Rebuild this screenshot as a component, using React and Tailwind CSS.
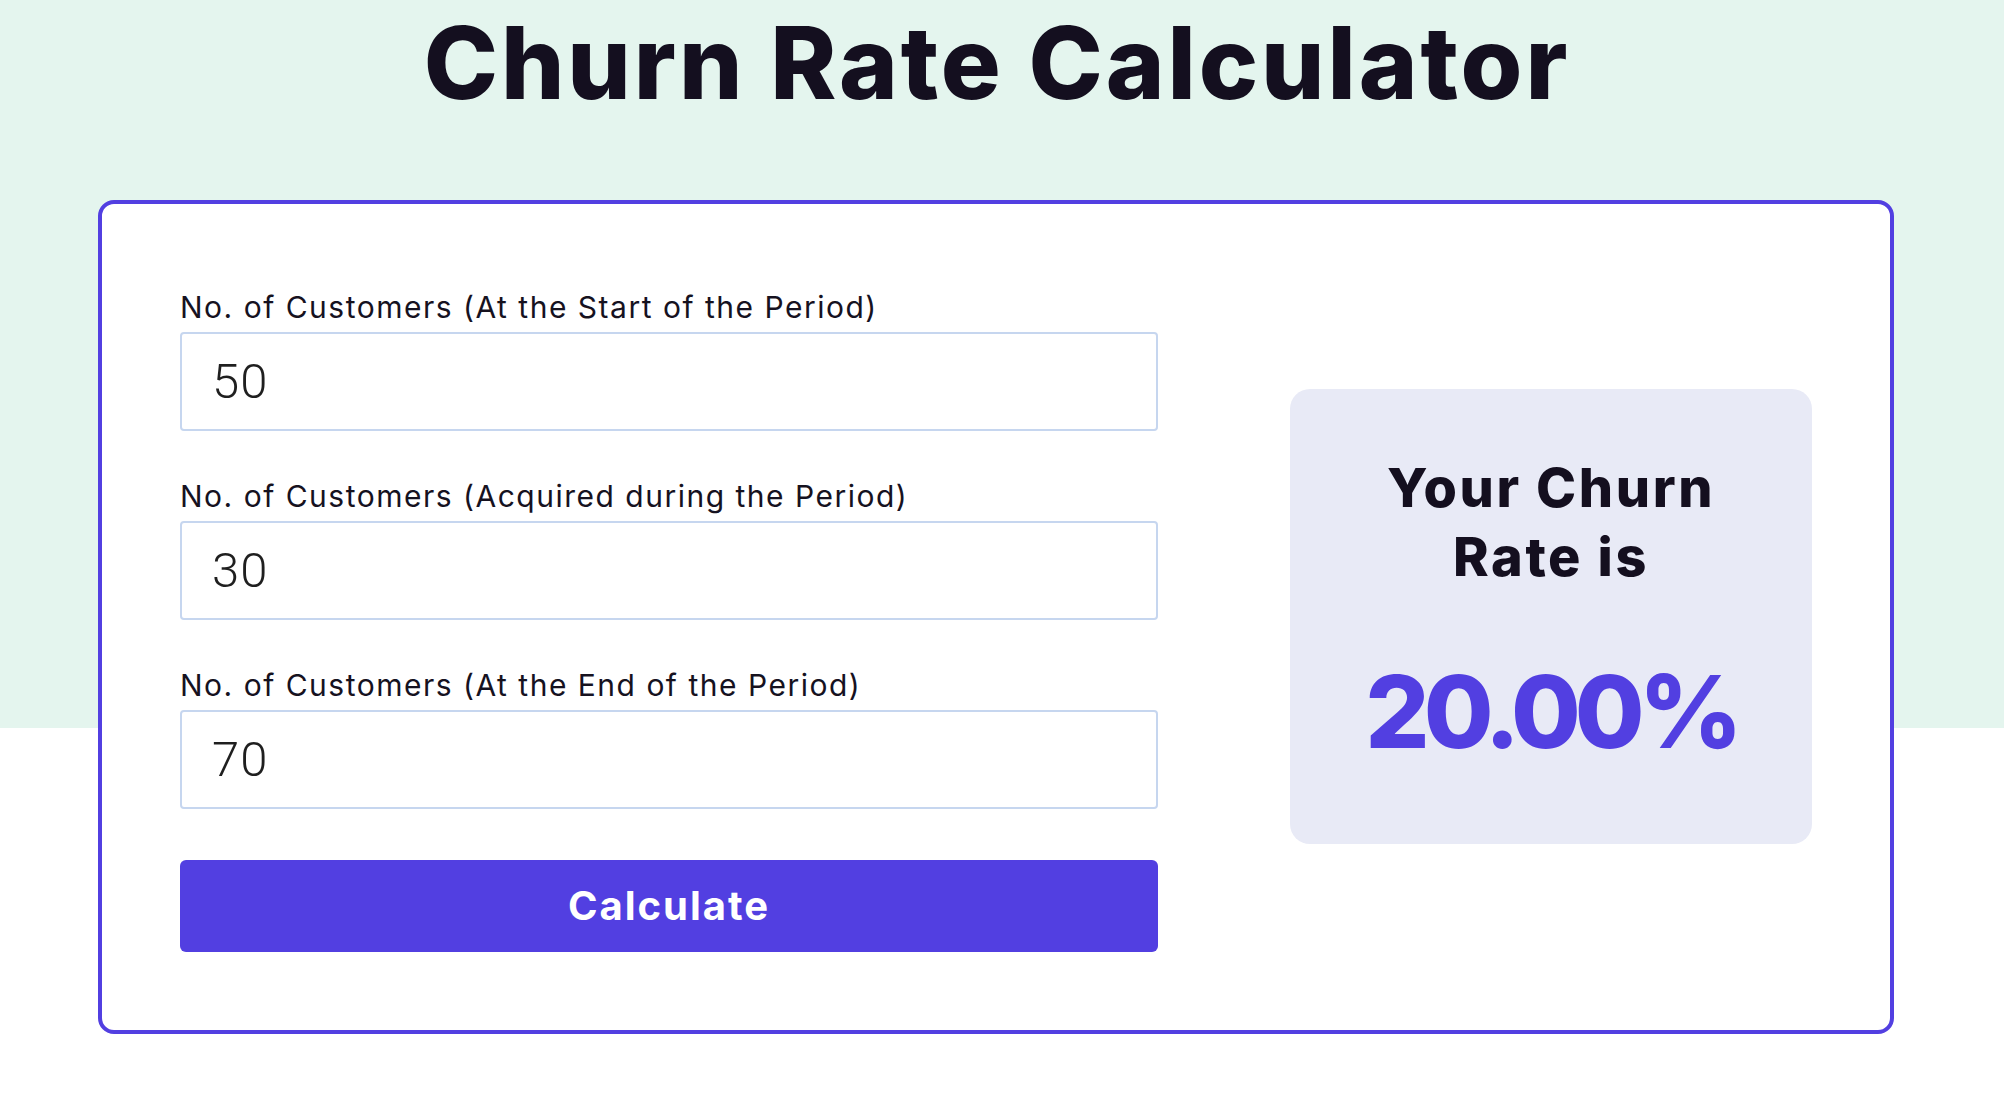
import React from "react";

function Field({ label, value, className = "" }) {
  return (
    <div className={"flex flex-col " + className}>
      <label className="block text-[30px] leading-[36px] font-normal tracking-[1.5px] text-[#16121f]">{label}</label>
      <input
        readOnly
        value={value}
        className="mt-[7px] h-[99px] w-full rounded-[4px] border-2 border-[#c6d6ef] bg-white pl-[30px] font-['Roboto',sans-serif] text-[49px] font-light tracking-[1px] text-[#1f1f1f] outline-none"
      />
    </div>
  );
}

export default function App() {
  return (
    <div className="min-h-[1094px] w-full bg-[linear-gradient(to_bottom,#e4f5ee_0px,#e4f5ee_728px,#ffffff_728px)] font-['Inter',sans-serif]">
      <h1 className="pt-[4px] pr-[10px] text-center text-[100px] font-extrabold leading-[117px] tracking-[2.9px] text-[#140f1f]">
        Churn Rate Calculator
      </h1>
      <div className="ml-[98px] mt-[79px] flex w-[1796px] items-start gap-[132px] rounded-[16px] border-4 border-[#523fe1] bg-white px-[78px] pt-[85px] pb-[78px]">
        <div className="flex w-[978px] flex-col">
          <Field label="No. of Customers (At the Start of the Period)" value="50" />
          <Field className="mt-[47px]" label="No. of Customers (Acquired during the Period)" value="30" />
          <Field className="mt-[47px]" label="No. of Customers (At the End of the Period)" value="70" />
          <button className="mt-[51px] h-[92px] w-full rounded-[6px] bg-[#523fe1] text-[40px] font-bold tracking-[2px] text-white">
            Calculate
          </button>
        </div>
        <div className="mt-[100px] flex h-[455px] w-[522px] flex-col items-center rounded-[20px] bg-[#e8eaf6] pt-[64px]">
          <div className="text-center text-[54px] font-extrabold leading-[69px] tracking-[2.6px] text-[#140f1f]">
            Your Churn
            <br />
            Rate is
          </div>
          <div className="mt-[70px] text-center text-[101px] font-extrabold leading-[100px] tracking-[-6px] text-[#523fe1]">
            20.00%
          </div>
        </div>
      </div>
    </div>
  );
}
